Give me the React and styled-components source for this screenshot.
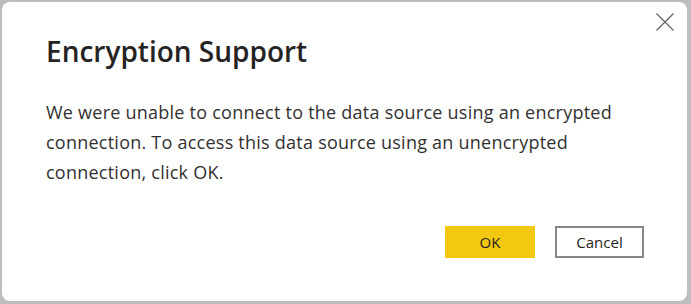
import React from "react";
import styled, { createGlobalStyle } from "styled-components";

const Global = createGlobalStyle`
  html, body { margin: 0; padding: 0; }
  body {
    width: 691px;
    height: 304px;
    background: #bdbdbd;
    overflow: hidden;
    font-family: "Open Sans", "Noto Sans", sans-serif;
  }
`;

const Frame = styled.div`
  box-sizing: border-box;
  width: 691px;
  height: 304px;
  padding: 2px 4px 3px 2px;
  display: flex;
`;

const Dialog = styled.div`
  position: relative;
  box-sizing: border-box;
  flex: 1;
  background: #ffffff;
  border-radius: 8px;
  padding: 31px 43px 0 44px;
  display: flex;
  flex-direction: column;
`;

const Title = styled.h1`
  margin: 0;
  font-size: 28px;
  font-weight: 600;
  line-height: 36px;
  color: #252423;
`;

const Body = styled.p`
  margin: 28px 0 0;
  font-size: 18px;
  line-height: 30px;
  letter-spacing: 0.24px;
  color: #323130;
`;

const Actions = styled.div`
  margin-top: 39px;
  display: flex;
  justify-content: flex-end;
  gap: 20px;
`;

const Button = styled.button`
  box-sizing: border-box;
  width: ${(p) => (p.$primary ? "90px" : "89px")};
  height: 32px;
  font-family: inherit;
  font-size: 15px;
  color: #252423;
  background: ${(p) => (p.$primary ? "#f2c811" : "#ffffff")};
  border: ${(p) => (p.$primary ? "none" : "2px solid #8a8886")};
  padding: 0;
  cursor: pointer;
`;

const Close = styled.button`
  position: absolute;
  top: 10px;
  right: 12px;
  width: 20px;
  height: 20px;
  padding: 0;
  border: none;
  background: none;
  display: flex;
  align-items: center;
  justify-content: center;
`;

export default function App() {
  return (
    <>
      <Global />
      <Frame>
        <Dialog>
          <Close aria-label="Close">
            <svg width="18" height="18" viewBox="0 0 18 18">
              <path d="M0.5 0.5 L17.5 17.5 M17.5 0.5 L0.5 17.5" stroke="#605e5c" strokeWidth="1.1" fill="none" />
            </svg>
          </Close>
          <Title>Encryption Support</Title>
          <Body>
            We were unable to connect to the data source using an encrypted
            connection. To access this data source using an unencrypted
            connection, click OK.
          </Body>
          <Actions>
            <Button $primary>OK</Button>
            <Button>Cancel</Button>
          </Actions>
        </Dialog>
      </Frame>
    </>
  );
}
